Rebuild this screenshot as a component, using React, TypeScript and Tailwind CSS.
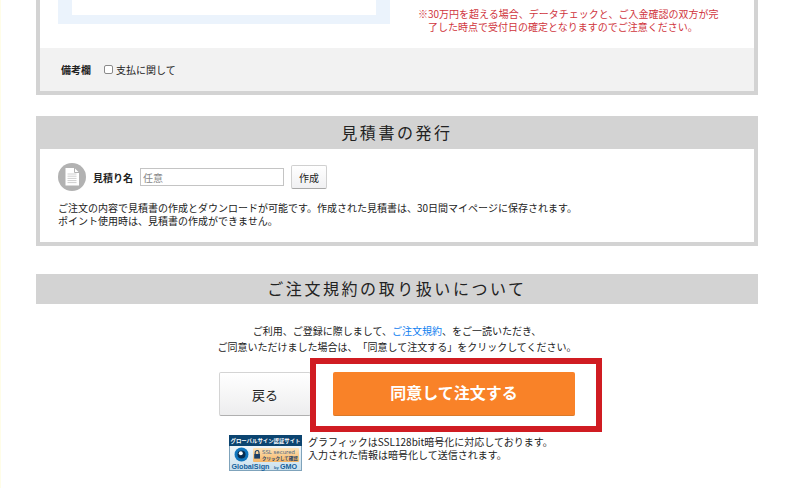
import React, { useState } from 'react';

const SectionTitle: React.FC<{ className: string; children: React.ReactNode }> = ({ className, children }) => (
  <h2 className={`flex items-center justify-center bg-[#d3d3d3] pb-0.5 text-base leading-5 tracking-[0.16em] ${className}`}>
    {children}
  </h2>
);

const DocumentIcon: React.FC = () => (
  <svg viewBox="0 0 28 28" className="h-7 w-7 shrink-0" aria-hidden="true">
    <circle cx="14" cy="14" r="14" fill="#b2b2b2" />
    <path d="M7.5 5h9l4.5 4.5V22.5H7.5z" fill="#fff" />
    <path d="M16.5 5v4.5H21" fill="none" stroke="#b2b2b2" strokeWidth="1" />
    <path d="M9.5 11h9M9.5 13.2h9M9.5 15.4h9M9.5 17.6h9M9.5 19.6h9" stroke="#cfcfcf" strokeWidth="1" />
  </svg>
);

const GlobalSignSeal: React.FC = () => (
  <svg viewBox="0 0 73 36" className="h-9 w-[73px] shrink-0 font-bold" role="img" aria-label="GlobalSign">
    <defs>
      <linearGradient id="sealBg" x1="0" y1="0" x2="0" y2="1">
        <stop offset="0" stopColor="#fff" />
        <stop offset="1" stopColor="#c9dfec" />
      </linearGradient>
      <linearGradient id="sealTag" x1="0" y1="0" x2="0" y2="1">
        <stop offset="0" stopColor="#fde3b8" />
        <stop offset="1" stopColor="#f5b566" />
      </linearGradient>
    </defs>
    <rect x="0.5" y="0.5" width="72" height="35" fill="url(#sealBg)" stroke="#7fa3bb" />
    <rect width="73" height="11" fill="#0b4470" />
    <text x="36.5" y="7.6" fontSize="5.4" fill="#fff" textAnchor="middle">グローバルサイン認証サイト</text>
    <path d="M4.5 19.5Q12.5 8.5 20.5 19.5Q12.5 30.5 4.5 19.5z" fill="#fff" />
    <circle cx="12.5" cy="19.5" r="7" fill="#0f75bd" />
    <circle cx="12.5" cy="19.5" r="4" fill="#062c50" />
    <circle cx="11.8" cy="18.3" r="2" fill="#fff" />
    <rect x="24" y="13" width="46" height="14" rx="1" fill="url(#sealTag)" />
    <path d="M26.2 19v-1.6a1.9 1.9 0 0 1 3.8 0V19" fill="none" stroke="#1d3f66" strokeWidth="1.1" />
    <rect x="25.2" y="19" width="5.8" height="4.6" fill="#1d3f66" />
    <text x="33" y="18.6" fontSize="5.4" fill="#4b6680" fontWeight="400" fontFamily="DejaVu Sans">SSL secured</text>
    <text x="33" y="25.2" fontSize="4.5" fill="#1d3f66">クリックして確認</text>
    <text x="2.5" y="33.5" fontSize="7.2" fill="#125f9c" fontFamily="Liberation Sans">GlobalSign</text>
    <text x="45" y="33.5" fontSize="4" fill="#125f9c" fontFamily="Liberation Sans">by</text>
    <text x="51" y="33.5" fontSize="7.2" fill="#125f9c" fontFamily="Liberation Sans">GMO</text>
  </svg>
);

const OrderConfirmPage: React.FC = () => {
  const [aboutPayment, setAboutPayment] = useState(false);
  const [estimateName, setEstimateName] = useState('');

  return (
    <div className="min-h-screen border-l border-[#fffde8] bg-white pr-[38px] pl-[35px] font-['Noto_Sans_CJK_JP',sans-serif] text-[10px] leading-[13px] text-[#222] [text-spacing-trim:space-all]">
      {/* Payment */}
      <section className="border-4 border-t-0 border-[#d3d3d3]">
        <div className="flex items-start gap-7 pr-4 pb-[15px] pl-[18px]">
          <div className="w-[332px] shrink-0 bg-[#ebf3fc] px-3.5 pb-[9px]">
            <div className="h-[15px] bg-white"></div>
          </div>
          <p className="pt-[7px] pl-2.5 -indent-2.5 whitespace-nowrap text-[#d0353d]">
            ※30万円を超える場合、データチェックと、ご入金確認の双方が完
            <br />
            了した時点で受付日の確定となりますのでご注意ください。
          </p>
        </div>
        <div className="flex h-[43px] items-center gap-[13px] bg-[#f2f2f2] pl-[21px]">
          <span className="font-bold">備考欄</span>
          <label className="flex items-center gap-[3px]">
            <input
              type="checkbox"
              checked={aboutPayment}
              onChange={(e) => setAboutPayment(e.target.checked)}
              className="h-[9px] w-[9px] appearance-none rounded-xs border border-[#8a8a8a] bg-white checked:bg-blue-500"
            />
            支払に関して
          </label>
        </div>
      </section>

      {/* Estimate */}
      <section className="mt-[21px] border-4 border-t-0 border-[#d3d3d3]">
        <SectionTitle className="h-[33px]">見積書の発行</SectionTitle>
        <div className="h-[93px] px-[18px] pt-3.5">
          <form className="flex items-center gap-[7px]" onSubmit={(e) => e.preventDefault()}>
            <DocumentIcon />
            <label htmlFor="estimate-name" className="font-bold">見積り名</label>
            <input
              id="estimate-name"
              type="text"
              placeholder="任意"
              value={estimateName}
              onChange={(e) => setEstimateName(e.target.value)}
              className="h-[18px] w-36 border border-[#c4c4c4] bg-white px-0.5 placeholder:text-[#888]"
            />
            <button
              type="submit"
              className="h-6 w-9 rounded-xs border border-[#d0d0d0] border-b-[#a8a8a8] bg-linear-to-b from-white to-[#f0f0f2]"
            >
              作成
            </button>
          </form>
          <p className="mt-2.5">
            ご注文の内容で見積書の作成とダウンロードが可能です。作成された見積書は、30日間マイページに保存されます。
            <br />
            ポイント使用時は、見積書の作成ができません。
          </p>
        </div>
      </section>

      {/* Terms */}
      <section className="mt-7">
        <SectionTitle className="h-[30px]">ご注文規約の取り扱いについて</SectionTitle>
        <p className="mt-[19px] text-center leading-4">
          ご利用、ご登録に際しまして、
          <a href="#terms" className="text-[#1080f0]">ご注文規約</a>
          、をご一読いただき、
          <br />
          ご同意いただけました場合は、「同意して注文する」をクリックしてください。
        </p>

        <div className="mt-[17px] flex justify-center gap-[22px]">
          <button
            type="button"
            className="h-11 w-[92px] rounded-xs border border-[#d4d4d4] border-b-[#b0b0b0] bg-linear-to-b from-white to-[#ededee] text-[13px]"
          >
            戻る
          </button>
          <div className="relative">
            <button
              type="button"
              className="h-11 w-[242px] rounded-xs border-b border-[#d97a2a] bg-[#f98228] pb-1 text-base font-bold text-white"
            >
              同意して注文する
            </button>
            <div className="pointer-events-none absolute -top-3.5 -right-[27px] -bottom-4 -left-[23px] border-6 border-[#d01c22]"></div>
          </div>
        </div>

        <div className="mt-[19px] flex justify-center gap-1.5">
          <GlobalSignSeal />
          <p className="w-[257px]">
            グラフィックはSSL128bit暗号化に対応しております。
            <br />
            入力された情報は暗号化して送信されます。
          </p>
        </div>
      </section>
    </div>
  );
};

export default OrderConfirmPage;
